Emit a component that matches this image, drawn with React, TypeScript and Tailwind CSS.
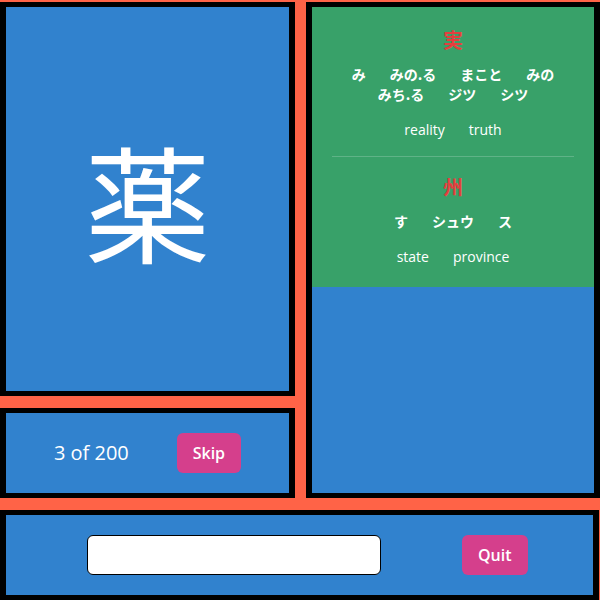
const entries = [
  {
    kanji: "実",
    readings: ["み", "みの.る", "まこと", "みの", "みち.る", "ジツ", "シツ"],
    meanings: ["reality", "truth"],
  },
  {
    kanji: "州",
    readings: ["す", "シュウ", "ス"],
    meanings: ["state", "province"],
  },
];

const font = { fontFamily: '"Open Sans", "Noto Sans CJK JP", sans-serif' };

export default function App() {
  return (
    <div
      className="w-[600px] h-[600px] bg-[#ff6347] pt-[2px] flex flex-col gap-3 overflow-hidden text-white"
      style={font}
    >
      <div className="flex gap-[11px] h-[496px]">
        <div className="w-[295px] flex flex-col gap-3">
          <div className="h-[394px] border-x-[6px] border-y-[5px] border-black bg-[#3182ce] flex items-center justify-center">
            <span className="text-[126px] leading-none font-['Noto_Sans_CJK_JP']">薬</span>
          </div>
          <div className="h-[90px] border-x-[6px] border-y-[5px] border-black bg-[#3182ce] flex items-center justify-evenly">
            <span className="text-xl">3 of 200</span>
            <button className="h-10 px-4 rounded-md bg-[#d53f8c] font-semibold text-base">Skip</button>
          </div>
        </div>
        <div className="w-[294px] border-x-[6px] border-y-[5px] border-black bg-[#3182ce]">
          <div className="bg-[#38a169] pt-[3px] pb-1">
            {entries.map((e, i) => (
              <div key={e.kanji}>
                {i > 0 && <div className="mx-5 border-t border-white/20" />}
                <div className="py-4 flex flex-col items-center">
                  <div className="text-xl leading-7 font-bold text-[#e53e3e] font-['Noto_Sans_CJK_JP']">{e.kanji}</div>
                  <div className="mt-[10px] flex flex-wrap justify-center text-sm leading-5 font-bold font-['Noto_Sans_CJK_JP']">
                    {e.readings.map((r) => (
                      <span key={r} className="mx-3">{r}</span>
                    ))}
                  </div>
                  <div className="mt-4 flex justify-center text-sm leading-5">
                    {e.meanings.map((m) => (
                      <span key={m} className="mx-3">{m}</span>
                    ))}
                  </div>
                </div>
              </div>
            ))}
          </div>
        </div>
      </div>
      <div className="h-[90px] w-[599px] shrink-0 border-x-[6px] border-y-[5px] border-black bg-[#3182ce] flex items-center pl-[81px] gap-[81px]">
        <input className="w-[294px] h-10 bg-white border border-black rounded-md px-4 text-black outline-none" />
        <button className="h-10 px-4 rounded-md bg-[#d53f8c] font-semibold text-base">Quit</button>
      </div>
    </div>
  );
}
